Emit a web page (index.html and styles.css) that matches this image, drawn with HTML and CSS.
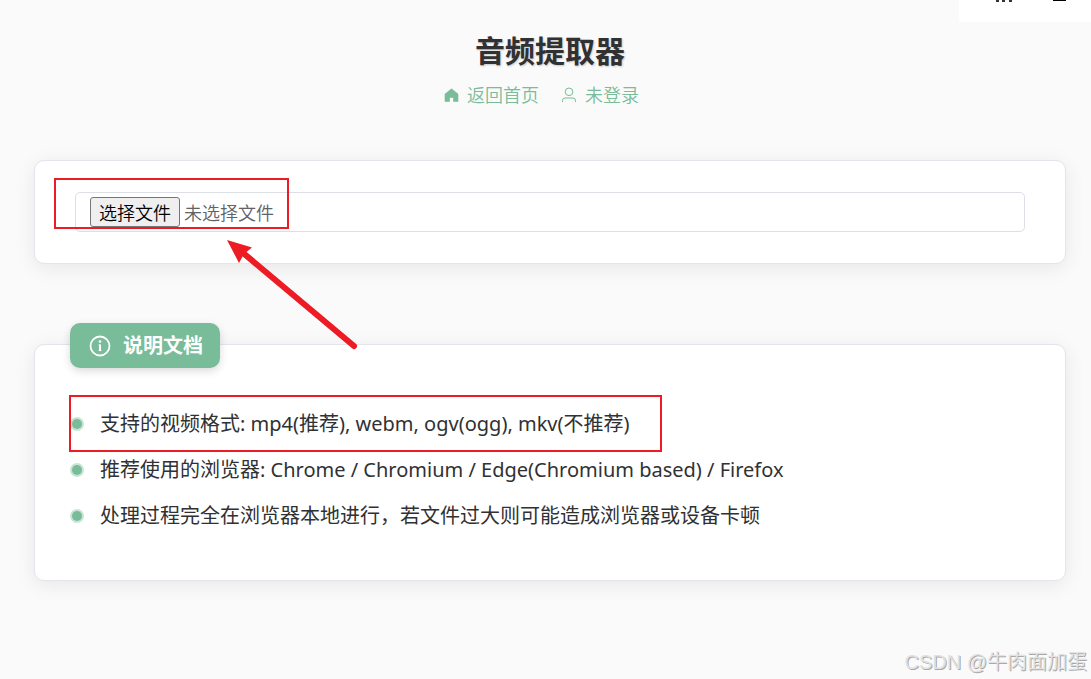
FILE: index.html
```html
<!DOCTYPE html>
<html lang="zh-CN">
<head>
  <meta charset="UTF-8" />
  <meta name="viewport" content="width=device-width, initial-scale=1.0"/>
  <title>音频提取器</title>
  <link rel="stylesheet" href="styles.css">
</head>
<body>
  <div class="corner-panel">
    <svg width="132" height="22" viewBox="0 0 132 22" aria-hidden="true">
      <path d="M37 0h3v2h-3zM43 0h3v2h-3zM50 0h3v2h-3z" fill="#333"/>
      <path d="M94 0h13v1H94z" fill="#000"/>
    </svg>
  </div>

  <header class="header">
    <h1>音频提取器</h1>
    <nav class="nav">
      <a href="#" class="nav-link">
        <svg class="icon" viewBox="0 0 16 16" aria-hidden="true">
          <path d="M8.500 2.800 2 8v7.500h4.500v-4h4v4H15V8z" fill="currentColor" stroke="currentColor" stroke-width=".6" stroke-linejoin="round"/>
        </svg>
        <span>返回首页</span>
      </a>
      <a href="#" class="nav-link">
        <svg class="icon" viewBox="0 0 16 16" fill="none" stroke="currentColor" aria-hidden="true">
          <circle cx="8" cy="5.800" r="3.800"/>
          <path d="M1.500 16v-1.500a2.500 2.500 0 0 1 2.500-2.500h8a2.500 2.500 0 0 1 2.500 2.500V16"/>
        </svg>
        <span>未登录</span>
      </a>
    </nav>
  </header>

  <main class="container">
    <section class="card upload-card">
      <div class="file-field">
        <button type="button" class="file-button" id="fileButton">选择文件</button>
        <label class="file-name" id="fileName" for="fileInput">未选择文件</label>
        <input type="file" class="file-input" id="fileInput" accept="video/*">
      </div>
      <div class="mark mark-upload"></div>
      <svg class="arrow" width="132" height="112" viewBox="0 0 132 112" aria-hidden="true">
        <path d="M15 12 127 106" stroke="#ed1c24" stroke-width="6" stroke-linecap="round"/>
        <path d="M0 0 25 7.5 17 14 12 23z" fill="#ed1c24"/>
      </svg>
    </section>

    <section class="card doc-card">
      <h2 class="doc-title">
        <svg class="info-icon" viewBox="0 0 22 22" fill="none" stroke="currentColor" aria-hidden="true">
          <circle cx="11" cy="11" r="9.5" stroke-width="1.8"/>
          <path d="M11 9.5V16" stroke-width="2"/>
          <path d="M9.500 9.900H11M9.500 15.600h3" stroke-width=".8"/>
          <circle cx="11" cy="6.500" r="1.300" fill="currentColor" stroke="none"/>
        </svg>
        <span>说明文档</span>
      </h2>
      <ul class="doc-list">
        <li>支持的视频格式: mp4(推荐), webm, ogv(ogg), mkv(不推荐)</li>
        <li>推荐使用的浏览器: Chrome / Chromium / Edge(Chromium based) / Firefox</li>
        <li>处理过程完全在浏览器本地进行，若文件过大则可能造成浏览器或设备卡顿</li>
      </ul>
      <div class="mark mark-formats"></div>
    </section>
  </main>

  <div class="watermark">CSDN @牛肉面加蛋</div>

  <script>
    const fileInput = document.getElementById('fileInput');
    const fileName = document.getElementById('fileName');

    document.getElementById('fileButton').addEventListener('click', () => fileInput.click());
    fileInput.addEventListener('change', () => {
      fileName.textContent = fileInput.files.length ? fileInput.files[0].name : '未选择文件';
    });
  </script>
</body>
</html>
```

FILE: styles.css
```css
* {
  box-sizing: border-box;
  margin: 0;
  padding: 0;
}

body {
  font-family: 'Noto Sans', 'Noto Sans CJK SC', sans-serif;
  background-color: #fafafa;
  color: #303133;
  min-height: 100vh;
  padding: 30px 25px 0 34px;
  position: relative;
}

.corner-panel {
  position: absolute;
  top: 0;
  right: 0;
  height: 22px;
  background-color: #fff;
}

.corner-panel svg {
  display: block;
}

.header {
  text-align: center;
}

h1 {
  font-size: 30px;
  line-height: 42px;
  text-shadow: 1px 1px 2px rgba(0, 0, 0, 0.2);
}

.nav {
  display: flex;
  justify-content: center;
  gap: 22px;
  padding-right: 18px;
  margin-top: 9px;
}

.nav-link {
  display: flex;
  align-items: center;
  gap: 8px;
  color: #78bc99;
  font-family: 'Noto Sans CJK SC', sans-serif;
  font-size: 18px;
  font-weight: 350;
  line-height: 26px;
  text-decoration: none;
}

.icon {
  width: 16px;
  height: 16px;
}

.container {
  margin-top: 53px;
}

.card {
  position: relative;
  background-color: #fff;
  border: 1px solid #e4e4ed;
  border-radius: 10px;
  box-shadow: 0 4px 20px rgba(0, 0, 0, 0.08);
}

.upload-card {
  padding: 31px 40px;
}

.file-field {
  display: flex;
  align-items: center;
  gap: 4px;
  height: 40px;
  padding: 0 14px;
  border: 1px solid #dcdfe6;
  border-radius: 5px;
  font-size: 18px;
}

.file-button {
  height: 30px;
  padding: 0 8px;
  border: 1px solid #767676;
  border-radius: 3px;
  background-color: #efefef;
  color: #000;
  font-family: 'Noto Sans CJK SC', sans-serif;
  font-size: 18px;
  font-weight: 350;
  line-height: 26px;
}

.file-name {
  color: #606266;
  font-family: 'Noto Sans CJK SC', sans-serif;
  font-weight: 350;
  line-height: 26px;
}

.file-input {
  position: absolute;
  width: 1px;
  height: 1px;
  opacity: 0;
}

.doc-card {
  margin-top: 80px;
  padding: 0 35px 41px;
}

.doc-title {
  display: flex;
  align-items: center;
  gap: 12px;
  width: fit-content;
  height: 45px;
  margin-top: -22px;
  padding: 0 17px 0 19px;
  border-radius: 10px;
  background-color: #78bc99;
  box-shadow: 0 3px 8px rgba(0, 0, 0, 0.15);
  color: #fff;
  font-size: 20px;
  line-height: 30px;
}

.info-icon {
  width: 22px;
  height: 22px;
}

.doc-list {
  margin-top: 33px;
  list-style: none;
}

.doc-list li {
  display: flex;
  align-items: center;
  gap: 18px;
  padding: 8px 0;
  font-size: 20px;
  line-height: 30px;
}

.doc-list li::before {
  content: '';
  flex: none;
  width: 10px;
  height: 10px;
  margin-left: 2px;
  border-radius: 50%;
  background-color: #78bc99;
  box-shadow: 0 0 0 2px #c9e4d6;
}

/* red annotations */
.mark {
  position: absolute;
  border: 2px solid #ed1c24;
  pointer-events: none;
}

.mark-upload {
  top: 17px;
  left: 19px;
  width: 235px;
  height: 51px;
}

.mark-formats {
  top: 50px;
  left: 34px;
  width: 593px;
  height: 57px;
}

.arrow {
  position: absolute;
  top: 79px;
  left: 192px;
  z-index: 2;
  pointer-events: none;
}

.watermark {
  position: absolute;
  right: 4px;
  bottom: 2px;
  color: #e2e2e2;
  font-family: 'Liberation Sans', 'Noto Sans CJK SC', sans-serif;
  font-size: 20px;
  font-weight: 350;
  line-height: 30px;
  text-shadow: 1px 1px 0 #a8a8a8;
}
```
